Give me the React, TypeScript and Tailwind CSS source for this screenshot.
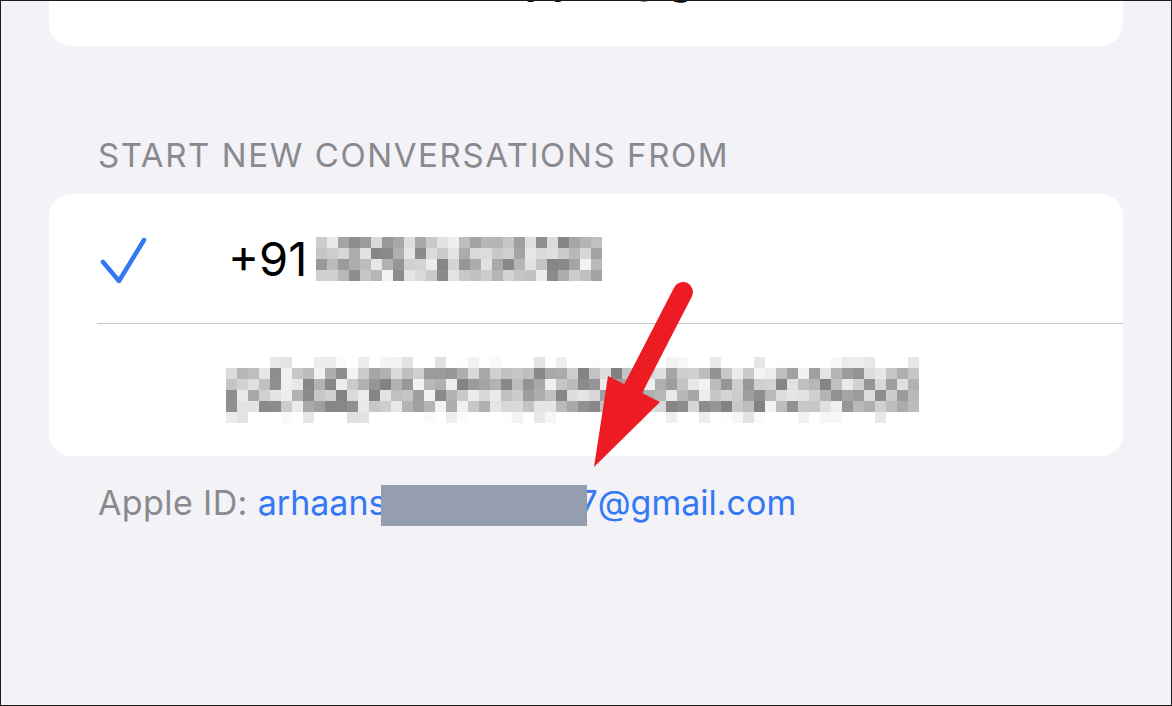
import React from "react";

const font = { fontFamily: "Inter, 'Liberation Sans', sans-serif" };

// deterministic "mosaic" for the redacted bits
function mosaic(seed: number, cols: number, rows: number, fade: boolean) {
  let s = seed;
  const rnd = () => {
    s = (s * 9301 + 49297) % 233280;
    return s / 233280;
  };
  const out: string[][] = [];
  for (let r = 0; r < rows; r++) {
    const row: string[] = [];
    for (let c = 0; c < cols; c++) {
      const edge = fade && (r === 0 || r === rows - 1);
      let v = edge ? 225 + Math.floor(rnd() * 30) : 130 + Math.floor(rnd() * 115);
      if (edge && rnd() > 0.5) v = 255;
      row.push(`rgb(${v},${v},${v})`);
    }
    out.push(row);
  }
  return out;
}

function Pixelated({ seed, cols, rows, fade = false }: { seed: number; cols: number; rows: number; fade?: boolean }) {
  const grid = mosaic(seed, cols, rows, fade);
  return (
    <div className="flex flex-col">
      {grid.map((row, i) => (
        <div key={i} className="flex">
          {row.map((c, j) => (
            <div key={j} className="w-[11px] h-[11px]" style={{ background: c }} />
          ))}
        </div>
      ))}
    </div>
  );
}

function Check() {
  return (
    <svg width="48" height="48" viewBox="0 0 48 48" className="shrink-0">
      <polyline
        points="3,27 19,46 44,5"
        fill="none"
        stroke="#3478f6"
        strokeWidth="4.5"
        strokeLinecap="round"
        strokeLinejoin="round"
      />
    </svg>
  );
}

export default function App() {
  return (
    <div
      className="relative w-[1172px] h-[706px] overflow-hidden bg-[#f2f2f7] border border-[#1c1c1e]"
      style={font}
    >
      {/* previous group, scrolled mostly out of view */}
      <div className="mx-[48px] mt-[-85px] bg-white rounded-b-[22px] h-[130px] flex items-center pl-[51px] pb-[12px]">
        <Check />
        <div className="ml-[82px] flex items-center gap-[8px]">
          <Pixelated seed={7} cols={26} rows={4} fade />
          <span className="text-[48px] leading-none text-black">yyo @gma</span>
          <Pixelated seed={3} cols={10} rows={4} fade />
        </div>
      </div>

      <div className="mt-[89px] pl-[97px] text-[33px] leading-[40px] text-[#8a8a8e] tracking-[1.6px]">
        START NEW CONVERSATIONS FROM
      </div>

      <div className="mx-[48px] mt-[19px] bg-white rounded-[22px]">
        <div className="h-[129px] flex items-center pl-[51px]">
          <Check />
          <span className="ml-[80px] text-[47px] leading-none text-black">+91</span>
          <div className="ml-[9px]">
            <Pixelated seed={11} cols={26} rows={4} />
          </div>
        </div>
        <div className="ml-[48px] h-px bg-[#c6c6c8]" />
        <div className="h-[132px] flex items-center pl-[177px]">
          <Pixelated seed={29} cols={63} rows={6} fade />
        </div>
      </div>

      <div className="mt-[27px] pl-[97px] text-[34px] leading-[40px] whitespace-nowrap">
        <span className="text-[#8a8a8e] tracking-[0.4px]">Apple ID: </span>
        <span className="text-[#3478f6]">arhaans</span>
        <span className="relative inline-block align-middle ml-[-6px] mr-[-8px] w-[206px] h-[41px] bg-[#949eae]" />
        <span className="text-[#3478f6]">7@gmail.com</span>
      </div>

      {/* annotation arrow */}
      <svg className="absolute left-0 top-0" width="1172" height="706" viewBox="0 0 1172 706">
        <line x1="682" y1="291" x2="632" y2="388" stroke="#ed1c24" strokeWidth="20" strokeLinecap="round" />
        <polygon points="607,375 659,401 593,466" fill="#ed1c24" />
      </svg>
    </div>
  );
}
